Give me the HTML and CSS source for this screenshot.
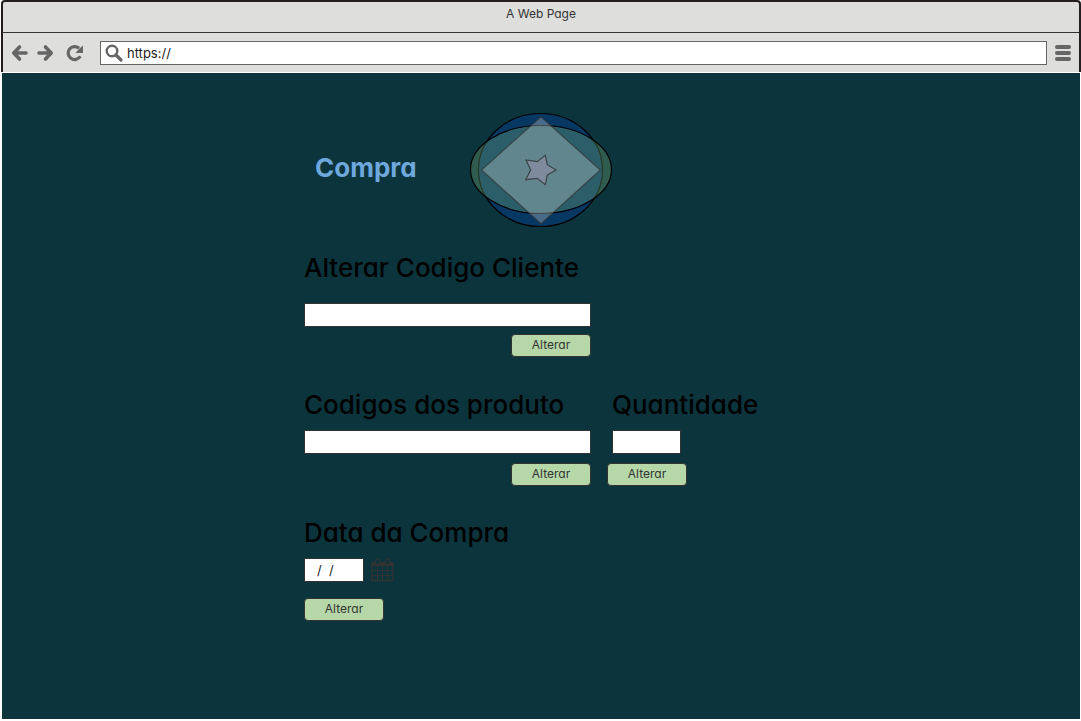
FILE: index.html
```html
<!DOCTYPE html>
<html lang="pt">
<head>
<meta charset="utf-8">
<meta name="viewport" content="width=device-width, initial-scale=1">
<title>A Web Page</title>
<link rel="stylesheet" href="styles.css">
</head>
<body>
<header class="browser">
  <div class="browser-title">A Web Page</div>
  <div class="toolbar">
    <button class="tool" type="button" aria-label="Back">
      <svg width="18" height="18" viewBox="0 0 18 18" fill="none" stroke="#666" stroke-width="3.6" stroke-linecap="round" stroke-linejoin="round"><path d="M8.500 3 2.800 9 8.500 15M3.500 9H15"/></svg>
    </button>
    <button class="tool" type="button" aria-label="Forward">
      <svg width="18" height="18" viewBox="0 0 18 18" fill="none" stroke="#666" stroke-width="3.6" stroke-linecap="round" stroke-linejoin="round"><path d="M8.500 3 14.200 9 8.500 15M13.500 9H2"/></svg>
    </button>
    <button class="tool tool-reload" type="button" aria-label="Reload">
      <svg width="18" height="18" viewBox="0 0 18 18"><path d="M14.300 12.300A6.500 6.500 0 1 1 13 4.200" fill="none" stroke="#666" stroke-width="3.200"/><path d="M17 1.500V9H9.500L13 5z" fill="#666"/></svg>
    </button>
    <label class="address">
      <svg width="18" height="18" viewBox="0 0 18 18" fill="none" stroke="#666"><circle cx="7" cy="7" r="5.300" stroke-width="2.400"/><path d="M11 11l5 5" stroke-width="3.200" stroke-linecap="round"/></svg>
      <input class="address-input" type="text" value="https://" aria-label="Address">
    </label>
    <button class="tool tool-menu" type="button" aria-label="Menu">
      <svg width="16" height="18" viewBox="0 0 16 18" fill="#666"><rect y="1" width="16" height="4" rx="2"/><rect y="7" width="16" height="4" rx="2"/><rect y="13" width="16" height="4" rx="2"/></svg>
    </button>
  </div>
</header>
<main class="page">
  <div class="content">
    <div class="hero">
      <h1 class="hero-title">Compra</h1>
      <svg class="logo" width="144" height="116" viewBox="469 112 144 116" role="img" aria-label="Logo">
        <ellipse cx="540.500" cy="170" rx="62" ry="56.500" fill="#073763" stroke="#000" stroke-width="1.200"/>
        <ellipse cx="541" cy="169.500" rx="70.500" ry="44" fill="#82b878" fill-opacity=".3" stroke="#000" stroke-width="1.200"/>
        <path d="M541 116.700 600.300 170 541 223.700 481.500 170z" fill="#e2e6e6" fill-opacity=".3" stroke="#333" stroke-opacity=".7" stroke-width="1.200"/>
        <path d="M556 170 547.300 175 545.300 184.700 537.300 178.300 525.700 179.700 530.700 170 526 160 537.300 161.700 545.300 155.300 547.300 164.700z" fill="#7e8b9d" stroke="#3c4448" stroke-width="1.200"/>
      </svg>
    </div>
    <form class="form">
      <section class="field field-client">
        <label class="label" for="client">Alterar Codigo Cliente</label>
        <input class="input" id="client" type="text">
        <button class="button button-end" type="button">Alterar</button>
      </section>
      <div class="row">
        <section class="field">
          <label class="label" for="product">Codigos dos produto</label>
          <input class="input" id="product" type="text">
          <button class="button button-end" type="button">Alterar</button>
        </section>
        <section class="field">
          <label class="label label-inset" for="quantity">Quantidade</label>
          <input class="input input-quantity" id="quantity" type="text">
          <button class="button" type="button">Alterar</button>
        </section>
      </div>
      <section class="field">
        <label class="label" for="date">Data da Compra</label>
        <div class="date">
          <input class="input input-date" id="date" type="text" value="/  /">
          <button class="calendar" type="button" aria-label="Calendar">
            <svg width="23" height="24" viewBox="0 0 23 24" fill="none" stroke="#333"><path d="M1 7.500V4.500h21v3z" fill="#333"/><path d="M1 5V22.500H22V5" stroke-width="1.300"/><path d="M1 12.500h21M1 17.500h21M6.500 8V22.500M11.500 8V22.500M16.500 8V22.500" stroke-width=".9"/><path d="M4.800 6.500V2.500Q4.800 1 6.500 1T8.200 2.500V6.500zM14.800 6.500V2.500Q14.800 1 16.500 1T18.200 2.500V6.500z" fill="#0c343d" stroke-width="1.200"/></svg>
          </button>
        </div>
        <button class="button" type="button">Alterar</button>
      </section>
    </form>
  </div>
</main>
</body>
</html>
```
FILE: styles.css
```css
* { box-sizing: border-box; }
body {
  margin: 0;
  min-height: 100vh;
  padding: 0 0 2px 1px;
  display: flex;
  flex-direction: column;
  background: #fff;
  font-family: Inter, "Open Sans", sans-serif;
  font-feature-settings: "cv11";
}
button, input { font: inherit; font-feature-settings: inherit; }
.browser {
  border: 2px solid #231f20;
  border-bottom: 0;
  border-radius: 4px 4px 0 0;
  background: #dededc;
}
.browser-title {
  height: 31px;
  border-bottom: 1px solid #333;
  font-size: 12px;
  line-height: 24px;
  text-align: center;
  color: #333;
}
.toolbar {
  display: flex;
  align-items: center;
  gap: 8px;
  height: 39px;
  padding: 0 8px;
}
.tool {
  display: flex;
  padding: 0;
  border: 0;
  background: none;
}
.tool-reload { margin: 0 8px 0 3px; }
.address {
  display: flex;
  flex: 1;
  align-items: center;
  gap: 4px;
  height: 24px;
  padding-left: 4px;
  border: 1px solid #666;
  background: #fff;
}
.address-input {
  flex: 1;
  min-width: 0;
  padding: 0;
  border: 0;
  outline: 0;
  background: none;
  font-size: 13px;
  color: #222;
}
.page {
  flex: 1;
  margin: 1px 1px 0;
  padding: 39px 16px;
  background: #0c343d;
}
.content {
  max-width: 474px;
  margin: 0 auto;
}
.hero {
  display: grid;
  grid-template-columns: 1fr auto 1fr;
  align-items: center;
}
.hero-title {
  margin: 0;
  padding: 0 0 4px 11px;
  font-size: 26px;
  line-height: 32px;
  color: #6fa8dc;
}
.form {
  display: flex;
  flex-direction: column;
  gap: 31px;
  padding-top: 24px;
}
.row {
  display: grid;
  grid-template-columns: 287px 1fr;
  gap: 16px;
}
.field {
  display: flex;
  flex-direction: column;
  align-items: flex-start;
  gap: 9px;
}
.field-client {
  gap: 7px;
  width: 287px;
  padding-bottom: 1px;
}
.field-client .label { margin-bottom: 12px; }
.label {
  font-size: 26px;
  font-weight: 500;
  line-height: 32px;
  white-space: nowrap;
  color: #000;
}
.label-inset { padding-left: 5px; }
.input {
  width: 100%;
  height: 24px;
  padding: 0 12px;
  border: 1px solid #333;
  border-radius: 0;
  background: #fff;
  font-size: 13px;
  color: #222;
}
.input-quantity { width: 69px; margin-left: 5px; }
.input-date { width: 60px; }
.date {
  display: flex;
  gap: 7px;
  margin-bottom: 7px;
}
.calendar {
  display: flex;
  padding: 0;
  border: 0;
  background: none;
}
.button {
  width: 80px;
  height: 23px;
  padding: 0 0 2px;
  border: 1px solid #333;
  border-radius: 4px;
  background: #b6d7a8;
  font-size: 12px;
  line-height: 19px;
  color: #333;
}
.button-end { align-self: flex-end; }
```
